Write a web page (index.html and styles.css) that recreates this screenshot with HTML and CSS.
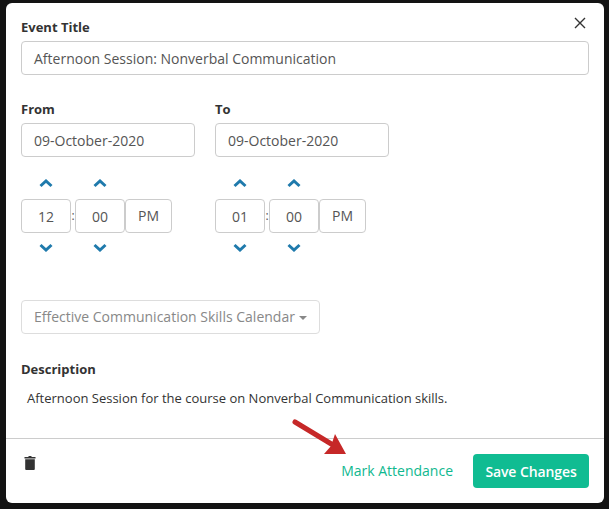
FILE: index.html
```html
<!DOCTYPE html>
<html lang="en">
<head>
<meta charset="UTF-8" />
<title>Edit Event</title>
<link rel="stylesheet" href="styles.css">
</head>
<body>

  <div class="modal">
    <div class="modal-body">
      <button class="close-btn" aria-label="Close">
        <svg width="12" height="12" viewBox="0 0 12 12"><path d="M1 1L11 11M11 1L1 11" stroke="#333" stroke-width="1.4" fill="none"/></svg>
      </button>

      <label class="field-label">Event Title</label>
      <div class="text-input title-input">Afternoon Session: Nonverbal Communication</div>

      <div class="date-row">
        <div class="date-col">
          <label class="field-label">From</label>
          <div class="text-input date-input">09-October-2020</div>
          <div class="time-picker">
            <div class="time-unit">
              <svg class="chevron chevron-up" viewBox="0 0 14 9"><path d="M1.5 7L7 2L12.5 7"/></svg>
              <div class="time-box">12</div>
              <svg class="chevron" viewBox="0 0 14 9"><path d="M1.5 2L7 7L12.5 2"/></svg>
            </div>
            <span class="time-sep">:</span>
            <div class="time-unit">
              <svg class="chevron chevron-up" viewBox="0 0 14 9"><path d="M1.5 7L7 2L12.5 7"/></svg>
              <div class="time-box">00</div>
              <svg class="chevron" viewBox="0 0 14 9"><path d="M1.5 2L7 7L12.5 2"/></svg>
            </div>
            <div class="ampm">PM</div>
          </div>
        </div>
        <div class="date-col">
          <label class="field-label">To</label>
          <div class="text-input date-input">09-October-2020</div>
          <div class="time-picker">
            <div class="time-unit">
              <svg class="chevron chevron-up" viewBox="0 0 14 9"><path d="M1.5 7L7 2L12.5 7"/></svg>
              <div class="time-box">01</div>
              <svg class="chevron" viewBox="0 0 14 9"><path d="M1.5 2L7 7L12.5 2"/></svg>
            </div>
            <span class="time-sep">:</span>
            <div class="time-unit">
              <svg class="chevron chevron-up" viewBox="0 0 14 9"><path d="M1.5 7L7 2L12.5 7"/></svg>
              <div class="time-box">00</div>
              <svg class="chevron" viewBox="0 0 14 9"><path d="M1.5 2L7 7L12.5 2"/></svg>
            </div>
            <div class="ampm">PM</div>
          </div>
        </div>
      </div>

      <div class="calendar-select">Effective Communication Skills Calendar<span class="caret"></span></div>

      <label class="field-label desc-label">Description</label>
      <p class="description">Afternoon Session for the course on Nonverbal Communication skills.</p>
    </div>

    <div class="modal-footer">
      <svg class="trash" width="12" height="14" viewBox="0 0 12 14">
        <path d="M4.500 0H7.500V1H11.500V2.500H0.500V1H4.500Z" fill="#333"/>
        <path d="M1.200 3.300H10.800V13Q10.800 14 9.800 14H2.200Q1.200 14 1.200 13Z" fill="#333"/>
      </svg>
      <div class="footer-actions">
        <a class="mark-link" href="#">Mark Attendance</a>
        <button class="save-btn">Save Changes</button>
      </div>
    </div>

    <svg class="arrow" width="60" height="42" viewBox="0 0 60 42">
      <path d="M5 4L43 27" stroke="#c62828" stroke-width="5" stroke-linecap="round" fill="none"/>
      <path d="M56 36L34 36L41 28L45 16Z" fill="#c62828"/>
    </svg>
  </div>

</body>
</html>
```

FILE: styles.css
```css
* {
  box-sizing: border-box;
}
body {
  margin: 0;
  height: 509px;
  overflow: hidden;
  padding: 3px 5px 6px 6px;
  background-color: #131313;
  font-family: "Open Sans", Arial, sans-serif;
  font-size: 14px;
  color: #555;
}
.modal {
  position: relative;
  height: 500px;
  background-color: #fff;
  border-radius: 6px;
}
.modal-body {
  position: relative;
  height: 436px;
  padding: 15px 15px 0;
  border-bottom: 1px solid #ccc;
}
.close-btn {
  position: absolute;
  top: 14px;
  right: 18px;
  display: flex;
  padding: 0;
  border: 0;
  background: none;
}
.field-label {
  display: block;
  height: 19px;
  font-size: 13px;
  line-height: 19px;
  font-weight: 700;
  color: #333;
}
.text-input {
  height: 34px;
  padding: 0 12px;
  border: 1px solid #ccc;
  border-radius: 4px;
  line-height: 33px;
  color: #555;
}
.title-input {
  margin-top: 4px;
}
.date-row {
  display: flex;
  gap: 20px;
  margin-top: 25px;
}
.date-col {
  width: 174px;
}
.date-input {
  margin-top: 4px;
}
.time-picker {
  display: flex;
  align-items: center;
  margin-top: 22px;
}
.time-unit {
  display: flex;
  flex-direction: column;
  align-items: center;
  gap: 10px;
  width: 50px;
}
.chevron {
  width: 14px;
  height: 9px;
  margin-right: 1px;
  fill: none;
  stroke: #1f7aac;
  stroke-width: 3;
}
.chevron-up {
  margin-bottom: 1px;
}
.time-box {
  width: 50px;
  height: 34px;
  border: 1px solid #ccc;
  border-radius: 4px;
  line-height: 33px;
  text-align: center;
  color: #555;
}
.time-sep {
  width: 4px;
  font-size: 12px;
  text-align: center;
}
.ampm {
  width: 47px;
  height: 34px;
  border: 1px solid #ccc;
  border-radius: 4px;
  line-height: 32px;
  text-align: center;
  color: #555;
}
.calendar-select {
  width: 299px;
  height: 34px;
  margin-top: 48px;
  padding: 0 12px;
  border: 1px solid #ddd;
  border-radius: 4px;
  line-height: 32px;
  color: #888;
  white-space: nowrap;
}
.caret {
  display: inline-block;
  margin-left: 4px;
  vertical-align: middle;
  border-top: 4px solid #888;
  border-left: 4px solid transparent;
  border-right: 4px solid transparent;
}
.desc-label {
  margin-top: 26px;
}
.description {
  margin: 9px 0 0 6px;
  font-size: 13px;
  line-height: 20px;
  color: #333;
}
.modal-footer {
  display: flex;
  justify-content: space-between;
  align-items: flex-start;
  padding: 15px 15px 0 18px;
}
.trash {
  margin-top: 2px;
}
.footer-actions {
  display: flex;
  align-items: center;
  gap: 20px;
}
.mark-link {
  margin-bottom: 2px;
  color: #10b88f;
  text-decoration: none;
}
.save-btn {
  width: 116px;
  height: 34px;
  padding: 0;
  border: 0;
  border-radius: 4px;
  background-color: #10bc92;
  font-family: inherit;
  font-size: 14px;
  font-weight: 600;
  letter-spacing: -0.1px;
  color: #fff;
}
.arrow {
  position: absolute;
  left: 284px;
  top: 415px;
}
```
